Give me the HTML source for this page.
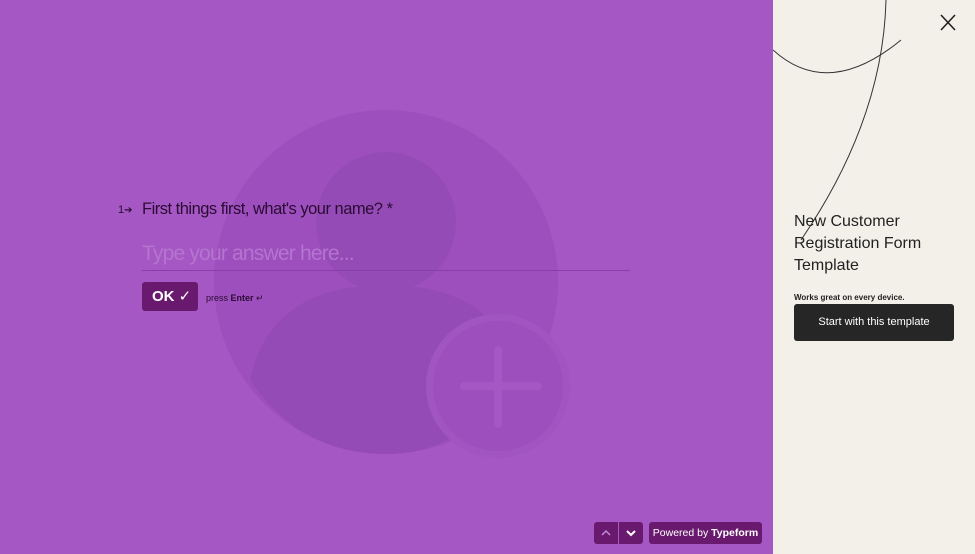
<!DOCTYPE html>
<html><head><style>
body{margin:0;width:975px;height:554px;overflow:hidden;position:relative;font-family:"Liberation Sans",sans-serif;background:#a557c4}
.right{position:absolute;left:773px;top:0;width:202px;height:554px;background:#f3f0ea}
.t{position:absolute;color:#2b0b33}
</style></head><body>
<svg style="position:absolute;left:0;top:0" width="773" height="554">
<circle cx="386" cy="282" r="172" fill="#9c4fbd"/>
<circle cx="386" cy="222" r="70" fill="#954bb6"/>
<path d="M250 380 Q270 285 386 285 Q500 285 520 380 Q460 454 386 454 Q300 454 250 380Z" fill="#954bb6"/>
<circle cx="498" cy="386" r="72" fill="#a155c1"/>
<circle cx="498" cy="386" r="65" fill="#9c4fbd"/>
<rect x="460" y="382" width="82" height="8" rx="4" fill="#a557c4"/>
<rect x="494" y="346" width="8" height="82" rx="4" fill="#a557c4"/>
</svg>
<div class="t" style="left:118px;top:204px;font-size:11px">1<span style="font-size:10px">➔</span></div>
<div class="t" style="left:142px;top:200px;font-size:16.5px;letter-spacing:-0.5px">First things first, what's your name? *</div>
<div style="position:absolute;left:142px;top:242px;font-size:21px;letter-spacing:-0.8px;color:#b474cf">Type your answer here...</div>
<div style="position:absolute;left:142px;top:270px;width:488px;height:1px;background:#8a3fa8"></div>
<div style="position:absolute;left:142px;top:282px;width:56px;height:29px;background:#6a1a6e;border-radius:3px;color:#fff;font-weight:bold;font-size:15px;line-height:29px;padding-left:10px;box-sizing:border-box">OK <span style="font-weight:normal">✓</span></div>
<div class="t" style="left:206px;top:293px;font-size:9px">press <b>Enter</b> ↵</div>
<div style="position:absolute;left:594px;top:522px;width:49px;height:22px;background:#6a1a6e;border-radius:3px"></div>
<div style="position:absolute;left:618px;top:522px;width:1px;height:22px;background:#a557c4"></div>
<svg style="position:absolute;left:594px;top:522px" width="49" height="22"><path d="M8 13l4-4 4 4" stroke="#c48ad6" stroke-width="1.5" fill="none"/><path d="M33 9l4 4 4-4" stroke="#fff" stroke-width="2" fill="none"/></svg>
<div style="position:absolute;left:649px;top:522px;width:113px;height:22px;background:#6a1a6e;border-radius:3px;color:#fff;font-size:10.5px;line-height:22px;text-align:center">Powered by <b>Typeform</b></div>
<div class="right">
<svg width="202" height="554" style="position:absolute;left:0;top:0">
<path d="M0 50 Q55 100 128 40" stroke="#333" fill="none" stroke-width="1"/>
<path d="M113 0 Q110 120 28 240" stroke="#333" fill="none" stroke-width="1"/>
<path d="M168 15l14 15M182 15l-14 15" stroke="#222" stroke-width="1.6"/>
</svg>
<div style="position:absolute;left:21px;top:211px;font-size:16px;line-height:22px;color:#222;width:170px">New Customer Registration Form Template</div>
<div style="position:absolute;left:21px;top:293px;font-size:8px;font-weight:bold;color:#222">Works great on every device.</div>
<div style="position:absolute;left:21px;top:304px;width:160px;height:37px;background:#262626;border-radius:3px;color:#fff;font-size:11px;line-height:37px;text-align:center">Start with this template</div>
</div>
</body></html>
